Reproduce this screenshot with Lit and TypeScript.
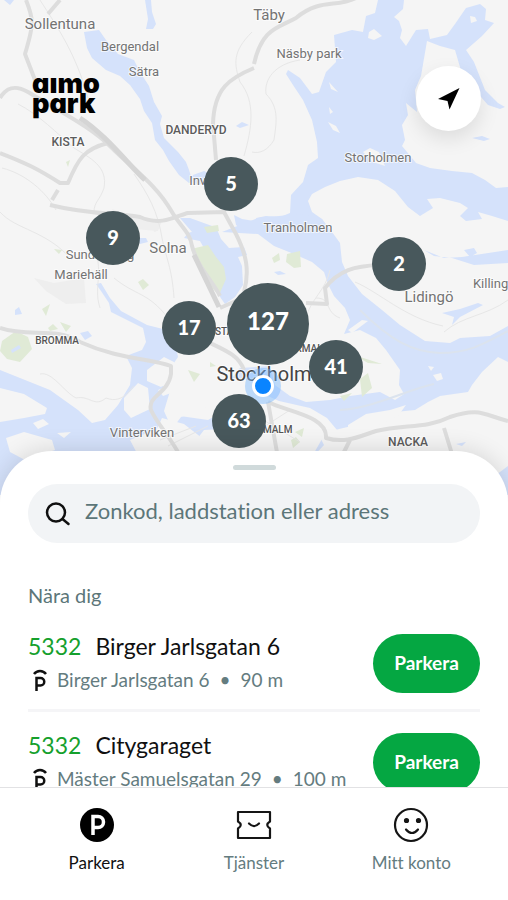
import { LitElement, html, svg, css } from "lit";
import { customElement } from "lit/decorators.js";

interface Cluster { n: string; x: number; y: number; big?: boolean }
interface Place { t: string; x: number; y: number; k: string }

const MAP_W = 508;
const MAP_H = 495;

const clusters: Cluster[] = [
  { n: "5", x: 231, y: 184 },
  { n: "9", x: 113, y: 238 },
  { n: "2", x: 399, y: 264 },
  { n: "17", x: 189, y: 328 },
  { n: "41", x: 336, y: 367 },
  { n: "63", x: 239, y: 421 },
  { n: "127", x: 268, y: 324, big: true },
];

const places: Place[] = [
  { t: "Sollentuna", x: 60, y: 29, k: "town" },
  { t: "Täby", x: 269, y: 20, k: "town" },
  { t: "Bergendal", x: 130, y: 51, k: "area" },
  { t: "Sätra", x: 144, y: 76, k: "area" },
  { t: "Näsby park", x: 309, y: 58, k: "area" },
  { t: "Storholmen", x: 378, y: 162, k: "area" },
  { t: "Tranholmen", x: 298, y: 232, k: "area" },
  { t: "DANDERYD", x: 196, y: 134, k: "district" },
  { t: "KISTA", x: 68, y: 146, k: "district" },
  { t: "Inverness", x: 217, y: 185, k: "area" },
  { t: "Sundbyberg", x: 100, y: 259, k: "area" },
  { t: "Mariehäll", x: 81, y: 279, k: "area" },
  { t: "Solna", x: 168, y: 253, k: "town" },
  { t: "BROMMA", x: 57, y: 344, k: "small" },
  { t: "VASASTAN", x: 215, y: 335, k: "small" },
  { t: "ÖSTERMALM", x: 301, y: 352, k: "small" },
  { t: "SÖDERMALM", x: 262, y: 433, k: "small" },
  { t: "Lidingö", x: 429, y: 302, k: "town" },
  { t: "Killinge", x: 494, y: 288, k: "area" },
  { t: "Vinterviken", x: 142, y: 437, k: "area" },
  { t: "NACKA", x: 408, y: 446, k: "district" },
  { t: "Stockholm", x: 264, y: 381, k: "city" },
];

const terrain = svg`
  <g class="water">
    <path d="M4 0h10l-4 5zM145 0h6l1 12 4 12-3 5h-7l2-10z"/>
    <path d="M84 32l15-2 7 10 12 14 16 6 6 12 9 14 5 16 8 14-2 8 4 14 14 14 8 10 3 8 4 12-4 1-10-8-10-14-6-11-8-10-3-17-8-12-4-12-10-14-10-9-14-6-14-12-5-10z"/>
    <path d="M236 126l6-4 7 3-9 3zM190 176l14-5 9 4-4 7-12 3z"/>
    <path d="M378 0H404L403 9 394 17 399 21 402 30 400 38 406 46 416 30 428 29 430 39 447 35 455 24 466 8 480 4 486 9 485 20 494 23 482 36 466 50 474 62 485 90 498 103 505 107 500 109 488 105 475 90 462 74 455 50 440 46 427 41 421 76 415 90 417 112 406 103 408 115 402 125 405 140 402 146 407 152 416 163 430 168 452 171 472 173 485 180 496 188 508 187V221L492 216 478 212 482 219 466 221 460 216 468 208 460 203 440 198 427 199 433 208 420 216 408 207 395 191 378 180 358 177 340 181 325 187 312 194 308 201 312 212 322 219 332 234 H262L256 218 266 216 280 217 290 213 291 195 303 182 308 165 318 158 317 142 312 120 303 100 293 85 286 74 288 70 300 78 312 94 319 92 326 72 336 62 334 35 352 30 363 32 366 16 375 13z"/>
    <path d="M222 232L258 218 300 214 322 219 332 232 340 243 342 262 348 276 362 294 382 310 400 325 425 341 450 343 460 338 490 336 508 326V362L498 357 482 372 472 385 468 392 440 396 428 402 415 410 395 412 380 418 360 424 335 430 325 424 300 418 275 404 262 395 250 380 232 378 240 368 270 366 275 385 290 396 306 402 330 400 350 396 380 392 395 400 404 394 399 385 400 370 386 350 376 338 360 330 344 334 350 320 345 308 334 296 328 284 324 272 312 262 294 254 274 246 258 234z"/>
    <path d="M202 229l14-2 5 12 8 9 15-1 3 8-9 2 4 9 1 19-8 12-10 7-7-10-5-18-4-19-9-16-16-3 4-5zM234 215l8 4 12 2v8l-10 2-8-6zM180 218l10 0 22 8-8 12-12-6zM138 238l8 0 2 4-8 2z"/>
    <path d="M96 284l5-1 9 15 11 13 26 14 16 4 12 13 3 15-11 16-9 10 12 8-6 20 8 18 9-12 16-6 17 3 18-9 22 3 20-4 7 13 18 20-10 20-22-13-12-9-16 4-18-10-17 1-10 13-13-12-13 14-13 4-16 4-14 5 4 14-20 24H0V370l20 8 30 12 28 20 14 13 13-3 13-15 12-20 2-17-6-12 16-6 4-8-3-14-16-8-16-8-2-9-8-12z"/>
    <path d="M424 250l20 8 18-1 46-7v13l-34 2-22-7-18-2zM464 250l10-2 3 5-7 4zM442 313l18-4 18-6 5 2-23 12-8 8 2-8zM80 333l8-2 4 5-7 4zM15 310l4-3 3 7-7 1zM472 138l10-2 8 3-6 2zM274 272l6-1 6 3-8 1zM456 444l10-2-4 4z"/>
    <path d="M484 484l24-18v29h-24zM172 450l12-12 8 8-6 14-24 10zM308 438l9-7 7 14-13 14h-20z"/>
  </g>
  <g class="land">
    <path d="M0 388l24 6 23 14-2 6-21 4-24 4zM6 438l18-6 28 8 3 10-30 10-15-8zM33 423l10-4 6 5-11 5zM57 433l14-1-7 6z"/>
    <path d="M124 398l14-15 10 5 2 21-19 9-7-8zM147 370l17-13 10 5 1 16-14 9-14-6zM130 440l22-9 20 8-10 11-22 9zM158 390l10-4 3 7-8 3z"/>
    <path d="M181 398l17-2 9 9-14 3zM174 407l24-3 22 9-12 7-28-4zM162 418l22 6 18 14 10 17-45 1-14-19z"/>
    <path d="M369 32l5-3 8 7-8 4-6-2zM470 16l5 1 2 4-6 2zM329 82l9 10-7-3zM328 122l8 4 4 7-7-3zM370 148l9 4 6 14-12-4-10-10zM329 107l4 5-3 2zM428 366l6 1-3 4zM433 375l8-2 2 6-6 2zM348 330l14-10 6 1-16 12z"/>
    <path d="M232 395l29-2 18 8 31 7 17 10 10 12-15 9-8 14h-71l-13-19zM296 385l4 8-4 2z"/>
    <path d="M348 425l18-11 24-4 16-5-8 11-30 14-20 3z"/>
  </g>
  <g class="park">
    <path d="M191 249l17-4 8 12 8 10 2 12-7 16-8-8-10-14-6-13zM2 341l14-10 12 6 4 12-12 13-13-3-7-8zM204 227l14-2 1 6-12 2z"/>
    <path d="M272 258l7-5 1 7-6 3zM287 254l13-3 1 16-7 1-8-6zM138 282l5-3 6 6-6 5zM48 328l5-4 5 5-8 2zM60 322l11 4-5 6zM42 309l8-5-4 12zM54 249l8 1-3 4zM66 162l4-2-2 7zM360 379l8-6 4 15-10 9zM340 396l12-3-8 8zM354 355l28 9-14-1zM188 370l12 4-6 8zM210 362l6 4-6 1zM295 432l9-4-2 9zM291 440l5-3 4 5-7 6z"/>
  </g>
  <path class="pond" d="M11 350l8-5 2 3-9 5z"/>
  <g class="built">
    <path d="M34 278l20 5 30-5 2 25-20 1-20-13zM112 209l24 9 26 3-4 10-34-3zM128 216l32 12-5 4z"/>
  </g>
  <g class="minor">
    <path d="M40 0c18 28 36 54 48 98M18 104c20 10 40 30 56 44 16 10 34 18 30 40-4 12-10 14-10 24M2 168c24 6 44 24 54 42M0 212c16 18 46 18 72 48M134 174c14 20 24 38 28 64 4 20 10 30 12 60M88 236c20 32 4 48 12 72M114 278c22 18 34 14 54 40M40 374c12-3 24 18 36 24 14-3 18 10 30 0 18 7 26-12 28-12M300 60c-26 4-36 20-34 34 14 14 10 30 8 46-6 10-14 14-22 12M252 32c-20 20-18 32-12 50 16 20 12 46 4 74M316 298c16 0 8 14 24 20M355 282c24 10 50 36 88 44M508 300c-22 16-46 16-64 32M330 270c-4 20-20 30-24 48M160 440l36-14M168 446l40-20M250 412l50 30M262 428l28-18"/>
    <path class="ferry" d="M360 310c30 30 52 42 80 43 28 0 42-8 68-22M340 410c34-2 66-20 94-26"/>
  </g>
  <g class="road">
    <path d="M60 0L48 14M26 0c8 20 8 24-1 54l10 26M0 98c6-10 14-14 28-6 40 24 64 36 84 56 22 22 44 36 60 64 8 14 18 20 20 34 6 22 20 34 28 50M0 153c26 10 38 16 60 30h8c10-24 16-34 40-40M58 190l-6 10M50 205c40 10 70 8 90 12 22 10 38-2 48-4l36-1 12 22c10 20 14 36 8 58M254 64c8-36 24-36 42-46 24-20 40-10 60-20M254 68c-24 10-40 20-41 56l3 36M0 328c30 10 54-2 80 14 40 18 70 16 91 24v8c-3 20-24 22-20 36 6 14 22 30 30 48M220 308l18-8M204 340c20 10 34 14 40 30M306 303l21 1-2-16c14-18 30-22 54-23M268 402l10 56M268 402c20 10 60 14 58 36 20 6 34-2 50-7 28-7 50-2 74-14 30-10 34-2 58 4M444 428l8 26M350 440l-8 16"/>
    <path class="wide" d="M194 255l25 52M80 118c25 16 48 46 65 62"/>
  </g>`;

@customElement("cluster-map")
export class ClusterMap extends LitElement {
  static styles = css`
    :host { display: block; position: relative; overflow: hidden; background: #f5f5f5; font-family: Roboto, sans-serif; }
    .canvas { display: block; width: 100%; height: 100%; }
    .water, .pond { fill: #d5e2fb; }
    .land { fill: #f5f5f5; }
    .park { fill: #e0ead6; }
    .built { fill: #eeeeee; }
    .minor { fill: none; stroke: #e7e7e7; stroke-width: 1; }
    .ferry { stroke: #dbe3ee; stroke-width: 2; }
    .road { fill: none; stroke: #dddddd; stroke-width: 4; stroke-linejoin: round; }
    .wide { stroke: #d5d5d5; stroke-width: 5; }
    text { text-anchor: middle; fill: #737373; stroke: #ffffff; stroke-width: 2; stroke-opacity: 0.7; paint-order: stroke; }
    .area { font-size: 13px; }
    .town { font-size: 15px; }
    .small { font-size: 10px; font-weight: 500; fill: #555555; }
    .district { font-size: 12px; font-weight: 500; fill: #5c5c5c; }
    .city { font-size: 20px; fill: #444444; }
    .cluster {
      position: absolute; transform: translate(-50%, -50%);
      width: 54px; height: 54px; padding: 0 0 2px; border: 0; border-radius: 50%;
      background: #48585c; color: #ffffff; cursor: pointer;
      font: 900 20px/24px Lato, sans-serif;
    }
    .big { width: 82px; height: 82px; padding-bottom: 6px; font-size: 24px; }
    .me {
      position: absolute; transform: translate(-50%, -50%); box-sizing: border-box;
      width: 22px; height: 22px; border: 3px solid #ffffff; border-radius: 50%;
      background: #0a84ff; box-shadow: 0 0 0 7px rgba(120, 185, 255, 0.45);
    }
  `;

  private at(x: number, y: number) {
    return `left:${(x / MAP_W) * 100}%;top:${(y / MAP_H) * 100}%`;
  }

  render() {
    return html`
      <svg class="canvas" viewBox="0 0 508 495" preserveAspectRatio="xMidYMid slice">
        ${terrain}
        ${places.map((p) => svg`<text class=${p.k} x=${p.x} y=${p.y}>${p.t}</text>`)}
      </svg>
      <span class="me" style=${this.at(263, 386)}></span>
      ${clusters.map((c) => html`
        <button class="cluster ${c.big ? "big" : ""}" style=${this.at(c.x, c.y)}>${c.n}</button>`)}
    `;
  }
}

interface Spot { code: string; name: string; street: string; distance: string }

const spots: Spot[] = [
  { code: "5332", name: "Birger Jarlsgatan 6", street: "Birger Jarlsgatan 6", distance: "90 m" },
  { code: "5332", name: "Citygaraget", street: "Mäster Samuelsgatan 29", distance: "100 m" },
];

@customElement("app-root")
export class AppRoot extends LitElement {
  static styles = css`
    :host { display: flex; flex-direction: column; height: 100vh; overflow: hidden; background: #ffffff; color: #101010; font-family: Lato, sans-serif; font-variant-ligatures: none; }
    button { font-family: inherit; cursor: pointer; }
    .top { position: relative; flex: none; height: 55vh; }
    .map { height: 100%; }
    .logo {
      position: absolute; left: 32px; top: 74px; margin: 0; color: #000000;
      font: 900 27px/20px Inter, sans-serif; font-feature-settings: "cv11";
    }
    .logo span { display: block; }
    .locate {
      position: absolute; right: 27px; top: 66px; width: 65px; height: 65px; padding: 0;
      display: grid; place-items: center; border: 0; border-radius: 50%;
      background: #ffffff; box-shadow: 0 8px 20px rgba(0, 0, 0, 0.1);
    }
    .sheet {
      position: relative; flex: 1; min-height: 0; overflow: hidden; margin-top: -44px; padding: 14px 28px 0;
      border-radius: 52px 52px 0 0; background: #ffffff; box-shadow: 0 0 24px rgba(0, 0, 0, 0.14);
    }
    .grip { width: 43px; height: 5px; margin: 0 auto 14px; border-radius: 3px; background: #d0dadb; }
    .search { display: flex; align-items: center; gap: 14px; height: 59px; padding: 0 17px; border-radius: 30px; background: #f2f4f6; }
    .search input { flex: 1; min-width: 0; border: 0; padding: 0 0 5px; outline: 0; background: none; color: #101010; font: 22px/28px Lato, sans-serif; font-variant-ligatures: none; }
    .search input::placeholder { color: #5c7679; opacity: 1; }
    .near { margin: 38px 0 14px; color: #5c7679; font-size: 20px; line-height: 28px; font-weight: 400; }
    .list { margin: 0; padding: 0; list-style: none; }
    .spot { display: flex; align-items: center; justify-content: space-between; height: 60px; padding: 10px 0 16px; }
    .spot + .spot { border-top: 3px solid #f5f5f7; padding-top: 20px; }
    .title { display: flex; gap: 14px; margin: 0; font-size: 23px; line-height: 28px; font-weight: 400; }
    .code { color: #15a02c; }
    .meta { display: flex; align-items: center; gap: 10px; margin: 6px 0 0; padding-left: 5px; color: #647c7f; font-size: 19px; line-height: 28px; white-space: nowrap; }
    .go { width: 107px; height: 59px; padding: 0 0 2px; border: 0; border-radius: 30px; background: #05a742; color: #ffffff; font-size: 19px; font-weight: 700; }
    .tabs { position: relative; flex: none; display: flex; justify-content: space-between; height: 112px; padding: 0 18px; border-top: 1px solid #e2e2e4; background: #ffffff; }
    .tab { display: flex; flex-direction: column; align-items: center; gap: 8px; width: 160px; padding-top: 19px; color: #647c7f; font-size: 17px; line-height: 24px; text-decoration: none; }
    .active { color: #101010; }
  `;

  render() {
    return html`
      <section class="top">
        <cluster-map class="map"></cluster-map>
        <h1 class="logo" aria-label="aimo park"><span>aımo</span><span>park</span></h1>
        <button class="locate" aria-label="Min position">
          <svg width="24" height="24" viewBox="0 0 24 24"><path d="M22.500 1 L12.500 22.500 L10.500 14 L1 12z"/></svg>
        </button>
      </section>
      <main class="sheet">
        <div class="grip"></div>
        <label class="search">
          <svg width="26" height="26" viewBox="0 0 26 26" fill="none" stroke="#101010" stroke-width="2.500" stroke-linecap="round"><circle cx="11" cy="11.500" r="9"/><path d="M17.500 18l6 5"/></svg>
          <input type="text" aria-label="Sök" placeholder="Zonkod, laddstation eller adress" />
        </label>
        <h2 class="near">Nära dig</h2>
        <ul class="list">
          ${spots.map((s) => html`
            <li class="spot">
              <div>
                <h3 class="title"><span class="code">${s.code}</span><span>${s.name}</span></h3>
                <p class="meta">
                  <svg width="14" height="22" viewBox="0 0 14 22" fill="none" stroke="#101010" stroke-width="2.500"><path d="M1 5c3-4 9-4 12 0M3.500 22V9h4a3.500 3.500 0 0 1 0 7.500h-4"/></svg>
                  <span>${s.street}</span><span>•</span><span>${s.distance}</span>
                </p>
              </div>
              <button class="go">Parkera</button>
            </li>`)}
        </ul>
      </main>
      <nav class="tabs">
        <a class="tab active" href="#parkera">
          <svg width="36" height="36" viewBox="0 0 36 36" fill="none"><circle cx="18" cy="18" r="17" fill="#000"/><path d="M14 28V9.500h5a5 5 0 0 1 0 11h-5" stroke="#fff" stroke-width="3.500"/></svg>
          <span>Parkera</span>
        </a>
        <a class="tab" href="#tjanster">
          <svg width="36" height="36" viewBox="0 0 36 36" fill="none" stroke="#151515" stroke-width="2.200" stroke-linejoin="round"><path d="M2 5h32v9.500q-5.500 3.500 0 7V31H2v-9.500q5.500-3.500 0-7z"/><path d="M13 16.500q5 5 10 0" stroke-linecap="round"/></svg>
          <span>Tjänster</span>
        </a>
        <a class="tab" href="#konto">
          <svg width="36" height="36" viewBox="0 0 36 36" fill="none" stroke="#151515" stroke-width="2.200"><circle cx="18" cy="18" r="16"/><circle cx="13.500" cy="13.500" r="1.500" fill="#151515"/><circle cx="25.500" cy="13.500" r="1.500" fill="#151515"/><path d="M13 22.500q6 7 12 0" stroke-linecap="round"/></svg>
          <span>Mitt konto</span>
        </a>
      </nav>
    `;
  }
}
